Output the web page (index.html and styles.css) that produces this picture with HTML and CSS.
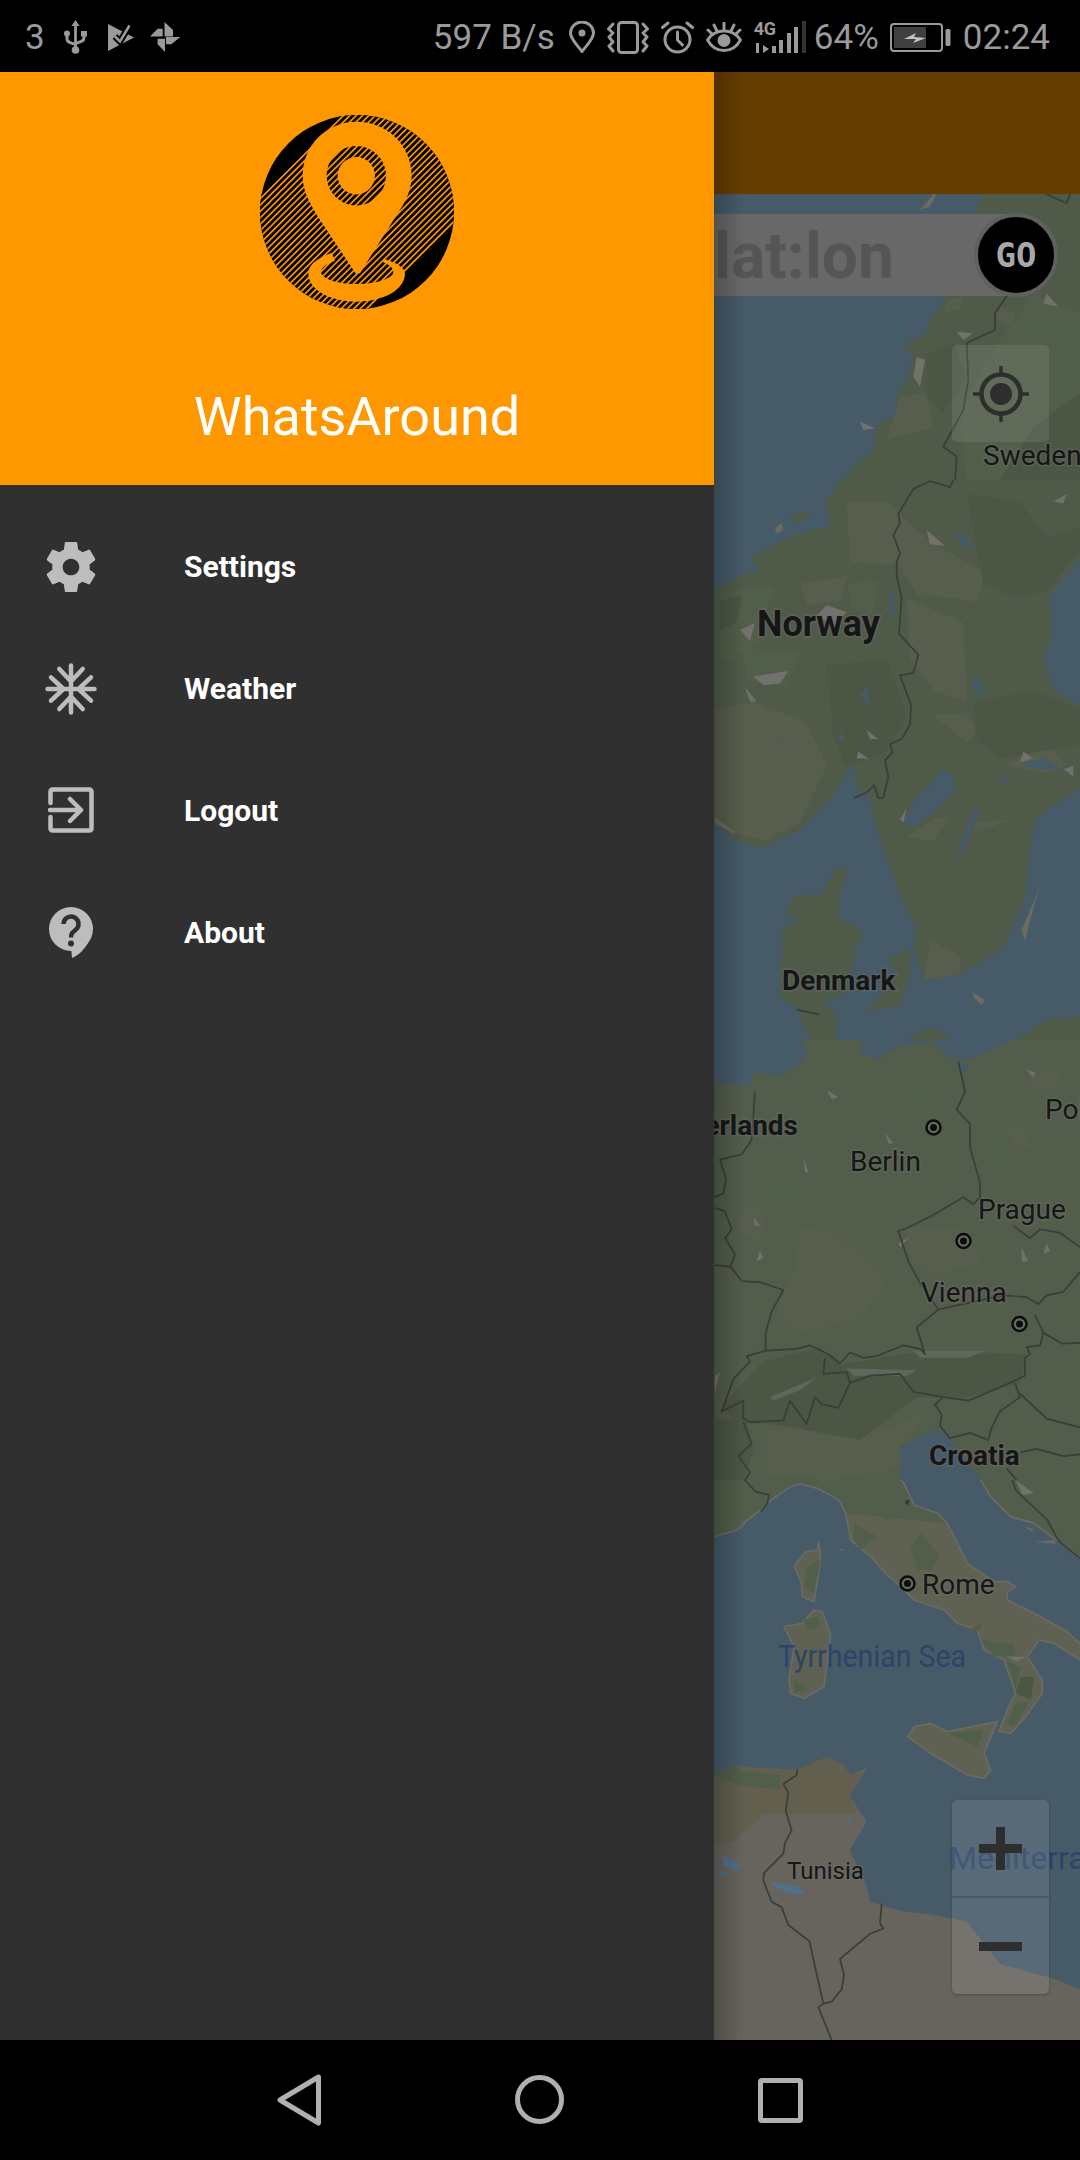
FILE: index.html
```html
<!DOCTYPE html>
<html lang="en">
<head>
<meta charset="utf-8">
<title>WhatsAround</title>
<link rel="stylesheet" href="styles.css">
</head>
<body>
<div class="phone">
  <header class="statusbar">
    <div class="status-left">
      <span class="status-text">3</span>
      <svg class="ic-usb" viewBox="0 0 23 34"><path class="si-fill" d="M11.5 0l4 6h-2.6v21.5h-2.8V6H7.500z"/><circle class="si-fill" cx="11.500" cy="30" r="3.800"/><circle class="si-fill" cx="3" cy="13.500" r="3"/><rect class="si-fill" x="17" y="11" width="6" height="5.500"/><path class="si-line" d="M3 15v4c0 3 3 4 8.500 5.500M20 16v2c0 3-3 4-8.500 5.500"/></svg>
      <svg class="ic-play" viewBox="0 0 26 27"><path class="si-fill" d="M0 0l26 13.500L0 27z"/><path class="si-cut" d="M7 12.500l5 5L21.500 1.500"/><path class="si-tick" d="M7 12.500l5 5L21.500 1.500"/></svg>
      <svg class="ic-wheel" viewBox="0 0 31 30"><path class="si-fill" d="M14.500 0L23 8v6.500h-8.500zM16 15h14.300l-9 7.300H16zM7.600 16.700H15V30l-7.400-7.700zM0 14.500l7.600-7.800h5.100v7.800z"/></svg>
    </div>
    <div class="status-right">
      <span class="status-text">597 B/s</span>
      <svg class="ic-pin" viewBox="0 0 26 32"><path class="si-line" d="M13 30.500C8 24 1.500 18 1.500 12a11.500 11 0 0 1 23 0c0 6-6.500 12-11.500 18.500z"/><circle class="si-fill" cx="13" cy="12" r="3.500"/></svg>
      <svg class="ic-vib" viewBox="0 0 42 33"><rect class="si-line" x="11.500" y="1.500" width="19" height="30" rx="3"/><path class="si-line" d="M6 3L1.500 8 6 12 2 16l4 5-4 4 4 5M36 3l4.500 5L36 12l4 4-4 5 4 4-4 5"/></svg>
      <svg class="ic-alarm" viewBox="0 0 33 33"><circle class="si-line" cx="16.500" cy="18.500" r="12.500"/><path class="si-line" d="M16.500 11v8l5 5M1.500 6.500L7 2M31.500 6.500L26 2"/></svg>
      <svg class="ic-eye" viewBox="0 0 36 30"><path class="si-line" d="M1.500 18C6 11 11 9 18 9s12 2 16.500 9C30 26 25 28.500 18 28.500S6 26 1.500 18z"/><circle class="si-fill" cx="18" cy="18.500" r="6.500"/><path class="si-line" d="M18 1v6M8 3l3 6M28 3l-3 6M2 8l4 4M34 8l-4 4"/></svg>
      <div class="signal">
        <span class="net-4g">4G</span>
        <svg class="ic-bars" viewBox="0 0 53 33"><path class="si-fill" d="M2 22h3v10H2zM9 24v8l6-4z"/><rect class="si-fill" x="18" y="25" width="4" height="7"/><rect class="si-fill" x="25" y="19" width="4" height="13"/><rect class="si-fill" x="33" y="12" width="4" height="20"/><rect class="si-fill" x="40" y="6" width="4" height="26"/><rect class="si-dim" x="48" y="0" width="4" height="32"/></svg>
      </div>
      <span class="status-text pct">64%</span>
      <svg class="ic-batt" viewBox="0 0 61 29"><rect class="si-thin" x="1" y="1" width="51" height="27" rx="3"/><rect class="si-dark" x="4" y="4" width="32" height="21"/><path class="si-bolt" d="M14 16l12-6-2 4 12 1-13 5 3-4z"/><rect class="si-fill" x="55.500" y="6" width="5" height="17" rx="1.500"/></svg>
      <span class="status-text time">02:24</span>
    </div>
  </header>

  <div class="content">
    <aside class="drawer">
      <div class="drawer-head">
        <svg class="logo" viewBox="0 0 194 194">
          <defs>
            <pattern id="hatch" width="4.500" height="4.500" patternUnits="userSpaceOnUse" patternTransform="rotate(-45)">
              <rect class="h-black" width="4.500" height="4.500"/>
              <rect class="h-orange" width="4.500" height="1.700"/>
            </pattern>
            <clipPath id="disc"><circle cx="97" cy="97" r="97"/></clipPath>
          </defs>
          <circle class="h-black" cx="97" cy="97" r="97"/>
          <polygon fill="url(#hatch)" clip-path="url(#disc)" points="-30,110 110,-30 240,65 65,240"/>
          <g transform="translate(-40 -25) scale(.33333)">
            <path class="h-orange" d="M410 95C500 95 575 165 575 258C575 300 555 340 530 375L420 550L408 552L300 390C265 335 248 300 248 258C248 165 320 95 410 95Z"/>
            <path class="h-orange" d="M335 488C290 505 265 525 265 550C265 600 330 635 410 635C490 635 555 600 555 550C555 535 535 520 495 508L488 516C510 525 520 535 520 545C520 565 470 582 410 582C350 582 303 565 303 545C303 530 325 520 345 512Z"/>
          </g>
          <circle fill="url(#hatch)" cx="96.300" cy="60.700" r="29.700"/>
          <circle class="h-orange" cx="96.300" cy="60.700" r="18.700"/>
        </svg>
        <div class="app-title">WhatsAround</div>
      </div>
      <nav class="menu">
        <a class="menu-row">
          <span class="menu-icon"><svg class="ic-gear" viewBox="2.600 2 18.800 20"><path class="mi-fill" fill-rule="evenodd" d="M19.140 12.940c.04-.3.06-.61.06-.94 0-.32-.02-.64-.07-.94l2.030-1.580c.18-.14.23-.41.12-.61l-1.920-3.320c-.12-.22-.37-.29-.59-.22l-2.390.96c-.5-.38-1.030-.7-1.620-.94l-.36-2.540c-.04-.24-.24-.41-.48-.41h-3.840c-.24 0-.43.17-.47.41l-.36 2.540c-.59.24-1.130.57-1.620.94l-2.390-.96c-.22-.08-.47 0-.59.22L2.740 8.870c-.12.21-.08.47.12.61l2.030 1.580c-.05.3-.09.63-.09.94s.02.64.07.94l-2.030 1.580c-.18.14-.23.41-.12.61l1.920 3.320c.12.22.37.29.59.22l2.390-.96c.5.38 1.030.7 1.620.94l.36 2.540c.05.24.24.41.48.41h3.840c.24 0 .44-.17.47-.41l.36-2.540c.59-.24 1.130-.56 1.620-.94l2.390.96c.22.08.47 0 .59-.22l1.920-3.320c.12-.22.07-.47-.12-.61l-2.010-1.580zM12 15.200c-1.770 0-3.200-1.430-3.200-3.200s1.430-3.200 3.200-3.200 3.200 1.430 3.200 3.200-1.430 3.200-3.200 3.200z"/></svg></span>
          <span class="menu-label">Settings</span>
        </a>
        <a class="menu-row">
          <span class="menu-icon"><svg class="ic-snow" viewBox="-26 -26 52 52">
            <g class="mi-stroke">
              <path d="M0 0V-23.500M-11.700-20L0-7.500 11.700-20"/>
              <path transform="rotate(90)" d="M0 0V-23.500M-11.700-20L0-7.500 11.700-20"/>
              <path transform="rotate(180)" d="M0 0V-23.500M-11.700-20L0-7.500 11.700-20"/>
              <path transform="rotate(270)" d="M0 0V-23.500M-11.700-20L0-7.500 11.700-20"/>
            </g></svg></span>
          <span class="menu-label">Weather</span>
        </a>
        <a class="menu-row">
          <span class="menu-icon"><svg class="ic-exit" viewBox="0 0 46 46"><g class="mi-stroke thin"><path d="M2.500 16V4.500a2 2 0 0 1 2-2h37a2 2 0 0 1 2 2v37a2 2 0 0 1-2 2h-37a2 2 0 0 1-2-2V30"/><path d="M2 23H33M22 12L33 23 22 34"/></g></svg></span>
          <span class="menu-label">Logout</span>
        </a>
        <a class="menu-row">
          <span class="menu-icon"><svg class="ic-help" viewBox="0 0 44 51"><circle class="mi-fill" cx="22" cy="22" r="22"/><path class="mi-fill" d="M22 40L23 51C30 48 36 42 40 34z"/><path class="mi-q" d="M14.500 17a7.500 7.500 0 1 1 12 6c-3 2.300-4.500 3.500-4.500 7.500"/><circle class="mi-dot" cx="22" cy="36.500" r="3"/></svg></span>
          <span class="menu-label">About</span>
        </a>
      </nav>
    </aside>

    <main class="main">
      <div class="appbar"></div>
      <div class="map">
        <svg class="map-svg" viewBox="714 194 366 1846">
          <defs>
            <g id="city"><circle class="city-ring" r="7"/><circle class="city-dot" r="3.500"/></g>
          </defs>
          <rect class="sea" x="714" y="194" width="366" height="1846"/>

          <g transform="translate(700 60) scale(.33333)">
            <polygon class="land" points="850,403 820,460 800,600 740,708 690,780 680,820 620,850 610,870 640,880 620,970 590,1000 590,1060 530,1100 520,1170 470,1210 430,1260 1140,1260 1140,403"/>
            <polygon class="pale" points="660,450 700,403 710,403 690,440"/>
            <polygon class="t-mid" points="1000,700 1140,760 1140,1000 1050,1260 800,1260 780,1060 860,900"/>
            <polygon class="t-dark" points="1140,1000 1140,1260 900,1260 1000,1100"/>
            <polygon class="t-light" points="740,720 790,710 780,750 730,760"/>
            <polygon class="t-light" points="900,740 950,760 930,800 890,780"/>
            <polygon class="t-pale" points="650,890 675,900 660,980 640,950"/>
            <polygon class="t-pale" points="480,1085 525,1105 490,1110"/>
            <polygon class="t-pale" points="770,815 820,820 790,840"/>
            <polygon class="t-pale" points="1040,700 1075,740 1030,730"/>
            <polygon class="t-light" points="600,1010 680,1000 700,1100 560,1140"/>
            <polygon class="t-dark" points="680,880 760,850 800,950 730,1060 680,1010"/>
            <polyline class="border" points="1110,403 1100,430 1040,403"/>
            <polyline class="border" points="920,708 885,760 885,810 830,835 800,850 805,960 790,1050 730,1160 770,1190 765,1260"/>
          </g>

          <g transform="translate(700 480) scale(.33333 .35714)">
            <polygon class="land" points="420,0 375,65 395,130 330,140 260,165 150,215 180,255 120,265 44,310 44,960 110,1010 190,1030 300,980 400,880 460,790 470,860 510,890 530,980 560,1060 600,1160 650,1260 640,1300 670,1400 780,1385 910,1310 970,1190 1005,950 1080,900 1140,860 1140,630 1060,590 1030,500 1055,430 1050,320 1140,220 1140,0"/>
            <polygon class="pale" points="225,135 245,120 250,140 230,150"/>
            <polygon class="land" points="265,100 330,85 335,100 290,120"/>
            <polygon class="t-light" points="40,640 160,620 320,680 380,800 300,960 190,1010 110,990 44,950"/>
            <polygon class="t-light" points="440,60 560,60 700,180 860,260 830,340 650,320 600,240 450,230"/>
            <polygon class="t-mid" points="44,320 140,300 220,300 180,450 100,500 44,520"/>
            <polygon class="t-dark" points="60,340 130,320 110,400 60,420"/>
            <polygon class="t-mid" points="130,470 300,480 260,580 140,560"/>
            <polygon class="t-light" points="300,290 440,270 420,340 320,350"/>
            <polygon class="t-mid" points="445,290 530,280 520,380 450,360"/>
            <polygon class="t-light" points="620,330 790,400 800,620 700,590 630,500"/>
            <polygon class="t-light" points="700,660 800,650 830,700 800,735"/>
            <polygon class="t-light" points="910,800 1040,740 1100,800 1040,820"/>
            <polygon class="t-light" points="620,1000 700,950 750,940 700,1010"/>
            <polygon class="t-light" points="820,990 830,960 930,950 880,970"/>
            <polygon class="t-light" points="690,1290 780,1330 780,1385 670,1400"/>
            <polygon class="t-dark" points="800,40 960,60 1040,160 1140,130 1140,200 1040,310 940,330 850,290"/>
            <polygon class="t-dark" points="820,620 1000,590 1140,640 1140,740 900,780 830,730"/>
            <polygon class="t-dark" points="380,520 560,500 620,660 560,760 440,800 400,720"/>
            <polygon class="t-pale" points="380,350 440,370 400,410 350,380"/>
            <polygon class="t-pale" points="160,550 265,535 240,570 190,575"/>
            <polygon class="t-pale" points="120,420 165,400 150,450"/>
            <polygon class="t-pale" points="135,580 170,620 150,620"/>
            <polygon class="t-pale" points="500,700 535,725 510,725"/>
            <polygon class="t-pale" points="475,760 505,780 470,780"/>
            <polygon class="t-pale" points="680,140 735,185 690,180"/>
            <polygon class="t-pale" points="1060,60 1100,40 1090,65"/>
            <polygon class="t-pale" points="620,920 610,960 600,950"/>
            <polygon class="t-pale" points="970,760 1000,780 960,790"/>
            <polygon class="t-pale" points="1090,810 1120,800 1120,830"/>
            <polygon class="lake" points="570,310 585,310 580,390 565,370"/>
            <polygon class="lake" points="760,150 800,160 820,190 785,185"/>
            <polygon class="lake" points="810,560 840,560 855,610 820,590"/>
            <polygon class="lake" points="500,580 515,640 480,600"/>
            <polygon class="lake" points="410,730 430,700 430,730"/>
            <polygon class="lake" points="240,735 255,730 255,745"/>
            <polygon class="lake" points="720,810 755,820 770,870 700,930 640,970 610,960 660,870 690,860"/>
            <polygon class="lake" points="830,910 840,925 790,1040 770,1050 790,990"/>
            <polygon class="lake" points="910,830 940,840 900,850"/>
            <polygon class="lake" points="960,790 1040,780 1080,810 1000,810"/>
            <polygon class="land" points="450,1080 400,1095 370,1160 280,1165 258,1210 295,1240 250,1250 245,1340 240,1445 290,1480 330,1568 410,1568 410,1500 370,1460 440,1440 470,1300 490,1270 470,1250 420,1230 420,1150"/>
            <polygon class="land" points="630,1315 560,1340 590,1385 540,1440 500,1490 600,1470 630,1380"/>
            <polygon class="land" points="950,1568 1040,1510 1140,1500 1140,1568"/>
            <polygon class="land" points="620,1568 700,1530 750,1568"/>
            <polygon class="pale" points="1020,1140 965,1260 975,1290 1000,1200"/>
            <polygon class="pale" points="820,1435 855,1455 845,1470 820,1450"/>
            <polygon class="pale" points="44,945 105,985 100,990 44,960"/>
            <polyline class="border" points="760,0 750,20 690,3 640,25 595,95 600,120 580,155 600,205 590,230 590,270 605,330 597,430 655,490 640,540 600,547 633,630 630,685 605,725 570,740 578,762 555,785 565,830 550,890 535,890 522,855 500,875 463,890"/>
            <polyline class="border" points="290,1483 358,1497"/>
          </g>

          <g transform="translate(714 1480) scale(.33333)">
            <polygon class="land2" points="0,170 70,150 100,120 140,90 165,65 230,20 260,12 310,25 375,60 395,100 410,180 470,230 520,285 560,320 600,360 690,390 730,430 790,450 810,510 870,540 905,640 880,690 855,755 890,760 935,710 985,640 985,600 940,530 975,480 1020,490 1098,540 1098,490 1060,455 960,400 880,360 880,335 905,320 880,305 840,305 760,250 700,130 670,100 600,75 570,10 560,-1 0,-1"/>
            <polygon class="land2" points="800,-1 830,50 890,110 960,130 1040,190 1098,235 1098,-1"/>
            <polygon class="olive" points="395,100 700,130 760,250 840,305 880,305 905,320 880,335 880,360 960,400 1060,455 1098,490 1098,540 1020,490 975,480 940,530 985,600 985,640 935,710 890,760 855,755 880,690 905,640 870,540 810,510 790,450 730,430 690,390 600,360 560,320 520,285 470,230 410,180"/>
            <polyline class="shore" points="0,170 70,150 100,120 140,90 165,65 230,20 260,12 310,25 375,60 395,100 410,180 470,230 520,285 560,320 600,360 690,390 730,430 790,450 810,510 870,540 905,640 880,690 855,755 890,760 935,710 985,640 985,600 940,530 975,480 1020,490 1098,540"/>
            <polyline class="shore" points="1098,490 1060,455 960,400 880,360 880,335 905,320 880,305 840,305 760,250 700,130 670,100 600,75 570,10 560,0"/>
            <polyline class="shore" points="800,0 830,50 890,110 960,130 1040,190 1098,235"/>
            <polygon class="coast" points="315,185 320,240 300,365 265,350 262,305 240,260 275,215 310,210"/>
            <polygon class="coast" points="300,390 325,395 350,465 330,620 270,655 230,640 225,600 240,500 210,440 265,430"/>
            <polygon class="coast" points="582,770 600,740 650,730 700,755 850,725 810,820 830,870 810,895 760,885 650,820"/>
            <polygon class="t-mid" points="0,0 90,0 140,40 100,100 0,140"/>
            <polygon class="t-mid" points="300,10 380,20 550,100 520,120 400,65"/>
            <polygon class="t-mid" points="420,130 490,170 440,210 420,180"/>
            <polygon class="t-mid" points="590,200 620,160 680,230 650,270 610,270"/>
            <polygon class="t-mid" points="800,480 870,490 900,490 905,525 840,530"/>
            <polygon class="t-mid" points="750,460 800,430 800,450"/>
            <polygon class="t-dark" points="920,590 960,590 950,660 905,640"/>
            <polygon class="t-mid" points="905,670 945,665 900,740 880,730"/>
            <polygon class="t-mid" points="880,545 920,560 905,630"/>
            <polygon class="t-mid" points="280,260 320,240 300,340 270,320"/>
            <polygon class="t-mid" points="270,420 310,410 320,440 280,450"/>
            <polygon class="t-mid" points="240,600 290,630 240,640"/>
            <polygon class="t-mid" points="700,760 810,750 790,800"/>
            <polygon class="t-mid" points="830,20 900,10 950,100 880,80"/>
            <polygon class="t-mid" points="1020,80 1098,120 1098,180 1040,130"/>
            <polygon class="t-pale" points="905,0 960,40 925,45"/>
            <polygon class="t-pale" points="880,530 935,530 910,545"/>
            <polygon class="pale" points="930,138 960,148 950,155"/>
            <polygon class="pale" points="960,185 1020,180 1030,192"/>
            <polygon class="pale" points="378,206 392,208 385,213"/>
            <polygon class="pond" points="575,60 587,62 582,75 574,72"/>
            <polyline class="border" points="895,0 905,30 1000,120 1035,185 1098,235"/>
            <polyline class="border" points="92,0 125,35 165,45 160,70 140,95"/>
          </g>

          <g transform="translate(700 1040) scale(.33333 .35714)">
            <polygon class="land2" points="44,120 150,130 165,90 250,100 300,65 325,30 300,0 490,0 480,40 540,55 590,20 700,0 740,50 810,55 940,0 1140,0 1140,1232 843,1232 745,1110 700,1090 600,1140 602,1232 44,1232"/>
            <polygon class="t-light" points="300,520 400,540 500,620 560,680 480,780 300,820 230,760 290,620"/>
            <polygon class="t-light" points="140,460 200,490 180,560 110,540"/>
            <polygon class="t-light" points="620,520 780,530 850,620 700,660 630,620"/>
            <polygon class="t-light" points="200,1090 560,1090 690,1040 600,1140 602,1200 400,1230 200,1220"/>
            <polygon class="t-light" points="1000,90 1080,90 1090,130 1000,140"/>
            <polygon class="t-light" points="880,270 960,240 1000,300 900,320"/>
            <polygon class="t-mid" points="160,380 300,380 340,470 200,500"/>
            <polygon class="t-mid" points="420,430 560,510 520,560 400,480"/>
            <polygon class="t-mid" points="620,130 740,130 700,190 620,190"/>
            <polygon class="t-mid" points="830,240 910,220 950,330 880,400"/>
            <polygon class="t-dark" points="190,900 360,860 420,910 600,880 700,870 980,880 960,960 800,1000 650,1000 480,1120 250,1080 100,1070 70,1020"/>
            <polygon class="t-alp" points="210,1000 350,945 300,980 220,1010"/>
            <polygon class="t-alp" points="440,920 650,925 620,940 460,940"/>
            <polygon class="t-alp" points="640,870 860,870 800,890 660,890"/>
            <polygon class="t-dark" points="44,1060 140,1070 160,1150 130,1232 44,1232"/>
            <polygon class="t-pale" points="380,140 415,160 395,165"/>
            <polygon class="t-pale" points="310,330 325,370 315,370"/>
            <polygon class="t-pale" points="555,260 580,290 565,290"/>
            <polygon class="t-pale" points="980,85 1005,90 1000,105"/>
            <polygon class="t-pale" points="595,570 630,550 600,580"/>
            <polygon class="t-pale" points="965,580 985,620 965,620"/>
            <polygon class="t-pale" points="1040,570 1050,590 1030,600"/>
            <polygon class="t-pale" points="180,590 190,610 170,620"/>
            <polygon class="t-pale" points="160,495 180,520 165,520"/>
            <polygon class="t-pale" points="44,940 60,930 44,990"/>
            <polygon class="lake" points="760,60 805,70 800,90 775,85"/>
            <polyline class="border" points="165,145 155,280 125,320 60,335 78,390 70,430 45,440"/>
            <polyline class="border" points="45,470 75,480 95,530 75,555 105,600 92,635 45,630"/>
            <polyline class="border" points="92,635 125,675 180,678 250,700 215,760 197,820 197,870 290,865 330,855 385,880 420,905 450,875 490,890 530,885 610,855 660,865 675,880 650,805 715,755 660,680 625,620 595,535 625,525 700,490 790,440 820,460 840,440 840,400 810,300 810,235 770,195 795,145 775,60"/>
            <polyline class="border" points="940,520 990,555 1020,530 1080,540 1140,580"/>
            <polyline class="border" points="715,755 760,745 910,715 980,720 1015,740 1040,715 1090,705 1140,650"/>
            <polyline class="border" points="1005,770 1030,820 1085,850 1140,848"/>
            <polyline class="border" points="1030,820 1020,855 980,860 990,880 975,890 975,940 930,960 880,980 805,1010 730,1000 640,985 600,935 510,940 450,960 440,930 370,935 375,890"/>
            <polyline class="border" points="197,870 140,885 150,900 100,950 65,1040 130,1010 130,1060 150,1070 250,1065 270,1010 320,1075 345,1000 365,1020 415,1030 450,960"/>
            <polyline class="border" points="130,1070 155,1130 115,1165 150,1210 135,1232"/>
            <polyline class="border" points="730,1000 705,1020 725,1050 720,1080 750,1115 810,1100 865,1120 875,1085 900,1040 960,1000 945,960"/>
            <polyline class="border" points="960,990 1040,1060 1140,1085"/>
            <polyline class="border" points="960,1155 1010,1145 1090,1165 1140,1160"/>
            <polyline class="border" points="920,1200 950,1232"/>
          </g>

          <g transform="translate(700 1600) scale(.33333 .35714)">
            <polygon class="desert" points="42,490 100,465 170,470 290,475 380,440 430,460 450,490 500,470 450,550 500,620 450,700 500,800 510,845 600,870 690,880 800,900 900,1020 1060,1060 1140,1090 1140,1232 42,1232"/>
            <polygon class="t-africa" points="42,490 100,465 170,470 290,475 380,440 430,460 450,490 490,480 450,550 470,600 280,600 190,600 100,680 42,680"/>
            <polygon class="t-mid" points="42,490 100,465 140,480 240,490 240,530 120,520"/>
            <polygon class="lake2" points="65,715 120,740 115,758 70,745"/>
            <polygon class="lake2" points="55,755 85,765 60,778"/>
            <polygon class="lake2" points="215,790 290,800 315,820 280,825 215,800"/>
            <polygon class="lake2" points="435,605 455,620 450,630"/>
            <polyline class="border" points="292,475 290,490 250,515 265,540 257,590 275,645 255,680 250,710 192,765 190,785 215,845 245,860 265,910 328,955 370,1130 355,1140 395,1232"/>
            <polyline class="border" points="545,850 540,905 550,920 510,935 420,1005 432,1050 425,1090 395,1125 370,1130"/>
          </g>

          <text class="lb-b lb-lg" x="757" y="636">Norway</text>
          <text class="lb-b" x="782" y="990">Denmark</text>
          <text class="lb-b lb-end" x="798" y="1135">Netherlands</text>
          <text class="lb-r" x="850" y="1171">Berlin</text>
          <text class="lb-r" x="1045" y="1119">Poland</text>
          <text class="lb-r" x="978" y="1219">Prague</text>
          <text class="lb-r" x="921" y="1302">Vienna</text>
          <text class="lb-b" x="929" y="1465">Croatia</text>
          <text class="lb-r" x="922" y="1594">Rome</text>
          <text class="lb-r" x="983" y="465">Sweden</text>
          <text class="lb-r lb-sm" x="787" y="1879">Tunisia</text>
          <text class="lb-w" x="778" y="1667" textLength="188" lengthAdjust="spacingAndGlyphs">Tyrrhenian Sea</text>
          <text class="lb-w" x="949" y="1869">Mediterranean</text>

          <use href="#city" x="933.500" y="1127.500"/>
          <use href="#city" x="963.500" y="1241"/>
          <use href="#city" x="1019.500" y="1324"/>
          <use href="#city" x="907.500" y="1583.500"/>
        </svg>

        <div class="search">
          <span class="search-hint">lat:lon</span>
          <button class="go">GO</button>
        </div>
        <div class="map-btn locate">
          <svg class="ic-locate" viewBox="0 0 56 56"><circle class="lc-ring" cx="28" cy="28" r="19.500"/><circle class="lc-dot" cx="28" cy="28" r="11"/><path class="lc-tick" d="M28 0V9M28 47V56M0 28H9M47 28H56"/></svg>
        </div>
        <div class="zoom">
          <div class="zoom-btn"><svg class="ic-zoom" viewBox="0 0 43 43"><path class="zm-fill" d="M17 0h9v17h17v9H26v17h-9V26H0v-9h17z"/></svg></div>
          <div class="zoom-btn"><svg class="ic-zoom" viewBox="0 0 43 43"><rect class="zm-fill" y="17" width="43" height="9"/></svg></div>
        </div>
      </div>
      <div class="drawer-shadow"></div>
    </main>
  </div>

  <footer class="navbar">
    <svg class="nav-back" viewBox="0 0 46 52"><path class="nav-stroke" d="M41.500 3L3 26l38.500 23z"/></svg>
    <svg class="nav-home" viewBox="0 0 49 49"><circle class="nav-stroke" cx="24.500" cy="24.500" r="22"/></svg>
    <svg class="nav-recent" viewBox="0 0 45 45"><rect class="nav-stroke" x="2.500" y="2.500" width="40" height="40" rx="1.500"/></svg>
  </footer>
</div>
</body>
</html>
```

FILE: styles.css
```css
* { box-sizing: border-box; }
html, body { margin: 0; padding: 0; background: #000; }
body { font-family: Roboto, "Liberation Sans", sans-serif; }
.phone { width: 1080px; height: 2160px; display: flex; flex-direction: column; overflow: hidden; }

/* status bar */
.statusbar { height: 72px; flex: none; background: #000; display: flex; justify-content: space-between; align-items: center; padding: 2px 30px 0 25px; color: #9a9a9a; }
.status-left, .status-right { display: flex; align-items: center; }
.status-text { font-size: 35px; line-height: 66px; padding-top: 2px; white-space: nowrap; }
.si-fill { fill: #9a9a9a; }
.si-dim { fill: #333; }
.si-dark { fill: #404040; }
.si-bolt { fill: #c4c4c4; }
.si-line { fill: none; stroke: #9a9a9a; stroke-width: 3; stroke-linejoin: round; stroke-linecap: round; }
.si-thin { fill: none; stroke: #9a9a9a; stroke-width: 2; }
.si-cut { fill: none; stroke: #000; stroke-width: 6.500; }
.si-tick { fill: none; stroke: #9a9a9a; stroke-width: 2.500; }
.ic-usb { width: 23px; height: 34px; margin-left: 19px; }
.ic-play { width: 26px; height: 27px; margin-left: 21px; }
.ic-wheel { width: 31px; height: 30px; margin-left: 16px; }
.ic-pin { width: 26px; height: 32px; margin-left: 14px; }
.ic-vib { width: 42px; height: 33px; margin-left: 12px; }
.ic-alarm { width: 33px; height: 33px; margin-left: 12px; }
.ic-eye { width: 36px; height: 30px; margin-left: 12px; }
.signal { position: relative; width: 53px; height: 33px; margin-left: 12px; }
.ic-bars { display: block; width: 53px; height: 33px; }
.net-4g { position: absolute; left: 0; top: 0; font-size: 18px; line-height: 15px; font-weight: 700; color: #9a9a9a; letter-spacing: -.5px; }
.pct { margin-left: 7px; }
.ic-batt { width: 61px; height: 29px; margin-left: 11px; }
.time { margin-left: 12px; }

/* layout */
.content { flex: 1; display: flex; min-height: 0; }
.drawer { width: 714px; flex: none; background: #303030; display: flex; flex-direction: column; }
.drawer-head { height: 413px; flex: none; background: #ff9800; display: flex; flex-direction: column; align-items: center; padding-top: 43px; }
.logo { width: 194px; height: 194px; display: block; }
.h-black { fill: #000; }
.h-orange { fill: #ff9800; }
.app-title { margin-top: 76px; font-size: 54px; line-height: 64px; color: #fff; }

.menu { display: flex; flex-direction: column; padding-top: 21px; }
.menu-row { height: 121.800px; display: flex; align-items: center; padding-left: 41px; color: #fff; }
.menu-icon { width: 60px; height: 60px; margin-right: 83px; display: flex; align-items: center; justify-content: center; }
.menu-label { font-size: 30px; font-weight: 700; }
.ic-gear { width: 50px; height: 52px; }
.ic-snow { width: 52px; height: 52px; }
.ic-exit { width: 46px; height: 46px; }
.ic-help { width: 44px; height: 51px; }
.mi-fill { fill: #bdbdbd; }
.mi-stroke { fill: none; stroke: #bdbdbd; stroke-width: 4.500; stroke-linecap: round; stroke-linejoin: round; }
.mi-q { fill: none; stroke: #303030; stroke-width: 4.500; }
.mi-dot { fill: #303030; }

/* main, dimmed by the open drawer */
.main { flex: 1; position: relative; display: flex; flex-direction: column; min-width: 0; overflow: hidden; }
.appbar { height: 122px; flex: none; background: #663d00; }
.map { flex: 1; position: relative; overflow: hidden; }
.map-svg { display: block; width: 366px; height: 1846px; }
.drawer-shadow { position: absolute; left: 0; top: 0; bottom: 0; width: 30px; background: linear-gradient(to right, rgba(0,0,0,.22), rgba(0,0,0,0)); }

.sea { fill: #465a68; }
.land { fill: #505a49; }
.land2 { fill: #535d4c; }
.olive { fill: #5f6252; }
.shore { fill: none; stroke: #6b6b64; stroke-width: 5; }
.coast { fill: #5f6252; stroke: #6b6b64; stroke-width: 5; }
.desert { fill: #67635d; }
.pale { fill: #6a6b63; }
.t-light { fill: #585e4d; }
.t-mid { fill: #515e49; }
.t-dark { fill: #4c5645; }
.t-pale { fill: #71726c; }
.t-alp { fill: #62675b; }
.t-africa { fill: #625f4f; }
.lake { fill: #465a68; }
.lake2 { fill: #4f7087; }
.pond { fill: #333a36; }
.border { fill: none; stroke: #383e38; stroke-width: 1.700; vector-effect: non-scaling-stroke; stroke-linejoin: round; }
.city-ring { fill: #686b60; stroke: #0c0c0c; stroke-width: 2.500; }
.city-dot { fill: #0c0c0c; }

.lb-r, .lb-b { font-family: Roboto, sans-serif; font-size: 28px; fill: #161616; paint-order: stroke; stroke: rgba(110,110,105,.45); stroke-width: 3px; }
.lb-b { font-weight: 700; }
.lb-lg { font-size: 36px; }
.lb-end { text-anchor: end; }
.lb-sm { font-size: 24px; }
.lb-w { font-family: Roboto, sans-serif; font-size: 32px; fill: #2b4568; }

/* overlays on the map */
.search { position: absolute; left: 0; top: 20px; width: 302px; height: 82px; background: #686868; }
.search-hint { position: absolute; left: 0; top: 2px; font-size: 64px; line-height: 82px; font-weight: 700; color: #555; }
.go { position: absolute; right: -42px; top: -1px; width: 84px; height: 84px; border: 4px solid #606060; border-radius: 50%; background: #000; color: #a8a8a8; padding: 0; font-family: "DejaVu Sans Mono", monospace; font-weight: 700; font-size: 34px; letter-spacing: 0; display: flex; align-items: center; justify-content: center; }
.map-btn { position: absolute; left: 238px; top: 151px; width: 97px; height: 97px; background: rgba(255,255,255,.09); border-radius: 5px; display: flex; align-items: center; justify-content: center; }
.ic-locate { width: 56px; height: 56px; }
.lc-ring { fill: none; stroke: #2e2e2e; stroke-width: 4.500; }
.lc-dot { fill: #2e2e2e; }
.lc-tick { fill: none; stroke: #2e2e2e; stroke-width: 3.500; }
.zoom { position: absolute; left: 238px; top: 1606px; width: 97px; height: 194px; background: rgba(255,255,255,.1); border-radius: 5px; display: flex; flex-direction: column; box-shadow: 0 1px 3px rgba(0,0,0,.25); }
.zoom-btn { flex: 1; display: flex; align-items: center; justify-content: center; }
.zoom-btn + .zoom-btn { border-top: 2px solid rgba(60,60,60,.35); }
.ic-zoom { width: 43px; height: 43px; }
.zm-fill { fill: #2e2e2e; }

/* navigation bar */
.navbar { height: 120px; flex: none; background: #000; position: relative; display: flex; align-items: center; }
.nav-stroke { fill: none; stroke: #b0b0b0; stroke-width: 5; stroke-linejoin: round; }
.nav-back { width: 46px; height: 52px; margin-left: 277px; margin-top: -1px; }
.nav-home { width: 49px; height: 49px; margin-left: 192px; margin-top: -1px; }
.nav-recent { width: 45px; height: 45px; margin-left: 194px; }
```
